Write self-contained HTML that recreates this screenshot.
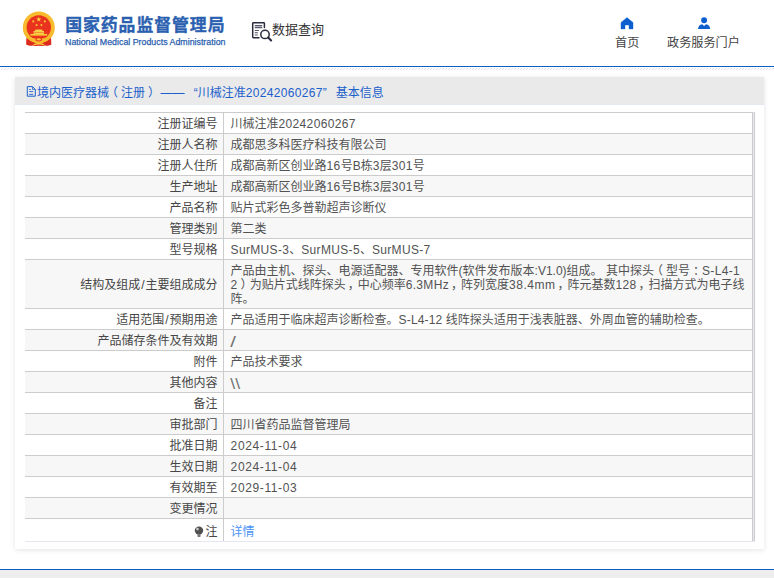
<!DOCTYPE html>
<html lang="zh-CN">
<head>
<meta charset="utf-8">
<title>国家药品监督管理局 数据查询</title>
<style>
*{box-sizing:border-box;margin:0;padding:0}
html,body{width:774px;height:578px;overflow:hidden;background:#fff}
body{position:relative;font-family:"Liberation Sans","Noto Sans CJK SC",sans-serif;font-size:12px;color:#444}
.abs{position:absolute;white-space:nowrap}
#hdrline{left:0;top:65.7px;width:774px;height:1.3px;background:#0c5fc2}
#hatch{left:0;top:67.7px;width:774px;height:2.6px;background:repeating-linear-gradient(135deg,#dedede 0,#dedede 0.6px,#fff 0.6px,#fff 2.1213px)}
#cn{left:65.2px;top:12.9px;font-size:16.9px;font-weight:bold;color:#2b5fb0;-webkit-text-stroke:.35px #2b5fb0;line-height:26px;letter-spacing:.92px}
#en{left:65px;top:37.1px;font-size:8.83px;color:#2b5fb0;-webkit-text-stroke:.25px #2b5fb0;line-height:10px;font-family:"Liberation Sans",sans-serif}
#dq{left:272px;top:20px;font-size:13px;color:#333;line-height:20px}
#home{left:615px;top:34.3px;font-size:12.15px;color:#444;line-height:18px}
#gov{left:667px;top:34.3px;font-size:12.15px;color:#444;line-height:18px}
#panel{left:15px;top:77px;width:749px;height:472px;background:#fff;box-shadow:0 1px 5px rgba(0,0,0,.11)}
#ptitle{left:0;top:0;width:749px;height:28px;background:#eaeaea;border-bottom:1px solid #e4e8f3;color:#1b5fcb;line-height:28px;padding-top:1.5px;padding-left:22px;font-size:12px}
#tbl{left:10px;top:35px;width:730px}
.r{position:relative;display:flex;width:730px;height:21px;border-top:1px solid #ccc;background:#fff}
.r.g{background:#f7f7f7}
.r .l{width:199px;height:20px;line-height:22px;text-align:right;padding-right:5.6px;border-right:1px solid #ccc;color:#464646;white-space:nowrap;flex:none}
.r .v{flex:1;height:20px;line-height:22px;padding-left:6.6px;color:#525252;white-space:nowrap}
.r.tall{height:49px}
.r.tall .l{height:48px;line-height:50px}
.sl{padding:0 .9px}
.bs{display:inline-block;transform-origin:0 32%;color:#727272}
.r.tall .v{height:48px;line-height:13.7px;padding-top:5.3px}
.r.last{height:23px}
.r.last .l,.r.last .v{height:22px;line-height:27px}
.d{letter-spacing:.62px}
.e2{letter-spacing:.5px}
.e1{letter-spacing:.15px}
.e{letter-spacing:.33px}
.pl{position:relative;left:-3px}
.pr{position:relative;left:3px}
.pc{position:relative;left:2px}
#rb{left:727px;top:0;width:3px;height:430px;border-left:1px solid #ccc;border-right:1px solid #ccc;background:#e8e8ee}
#bb{left:0;top:429px;width:730px;height:1px;background:#e6e6f2}
a.lnk{color:#4a93f5;text-decoration:none}
#ftline{left:0;top:568.8px;width:774px;height:1.3px;background:#0c5fc2}
#ftbg{left:0;top:570px;width:774px;height:8px;background:#eee}
</style>
</head>
<body>
<!-- header -->
<svg class="abs" id="emblem" style="left:15px;top:5px" width="50" height="50" viewBox="0 0 50 50">
  <path d="M11.6 31 L11.4 39.6 Q14.5 41.2 17.6 40.2 L20 41 L23.8 40.6 L27.6 41 L30 40.2 Q33 41.2 36.2 39.6 L36 31 Z" fill="#dc2a1c"/>
  <circle cx="23.8" cy="22.5" r="16" fill="#f7bb2d"/>
  <circle cx="23.8" cy="22.5" r="12.2" fill="#e9331f"/>
  <path d="M11.6 33.5 L11.4 39.6 Q14.5 41.2 17.6 40.2 L20 41 L23.8 40.6 L27.6 41 L30 40.2 Q33 41.2 36.2 39.6 L36 33.5 Q30 38.6 23.8 38.6 Q17.6 38.6 11.6 33.5 Z" fill="#dc2a1c"/>
  <polygon points="23.8,11.6 24.45,13.5 26.45,13.5 24.85,14.7 25.45,16.6 23.8,15.45 22.15,16.6 22.75,14.7 21.15,13.5 23.15,13.5" fill="#f9d53c"/>
  <circle cx="18.3" cy="16.4" r="1.05" fill="#f6c634"/><circle cx="29.8" cy="16.4" r="1.05" fill="#f6c634"/>
  <circle cx="21.6" cy="20.1" r="1.05" fill="#f6c634"/><circle cx="26.4" cy="20.1" r="1.05" fill="#f6c634"/>
  <path d="M19.9 26 L20.6 24.6 H27 L27.7 26 H29 V28.9 H18.6 V26 Z" fill="#f8cf45"/>
  <rect x="15.4" y="28.9" width="16.8" height="1.8" fill="#f7c535"/>
  <path d="M19 27.5 H28.6" stroke="#e9331f" stroke-width=".55" opacity=".7"/>
  <path d="M13.5 32 Q23.8 35.5 34.1 32 L32 35.4 Q23.8 38.8 15.6 35.4 Z" fill="#f7bb2d"/>
  <ellipse cx="23.8" cy="34.6" rx="3.4" ry="1.8" fill="#e9331f"/>
  <ellipse cx="23.8" cy="34.4" rx="2.2" ry="1.1" fill="#f7c535"/>
  <path d="M18.2 39.2 Q23.8 36.2 29.4 39.2 L28.6 40.4 Q23.8 38.4 19 40.4 Z" fill="#f7c535"/>
</svg>
<div class="abs" id="cn">国家药品监督管理局</div>
<div class="abs" id="en">National Medical Products Administration</div>
<svg class="abs" style="left:245px;top:15px" width="40" height="30" viewBox="0 0 40 30" fill="none" stroke="#2b2b3f" stroke-width="1.5">
  <path d="M19.4 12.6 V8.4 Q19.4 7.7 18.7 7.7 H8.4 Q7.7 7.7 7.7 8.4 V22.1 Q7.7 22.8 8.4 22.8 H14" stroke-linecap="round"/>
  <path d="M9.8 10.5 H17.2 M9.8 12.6 H17.2" stroke="#55556a" stroke-width="1.1"/>
  <path d="M9.8 11.55 H17.2" stroke="#b5b5c0" stroke-width="1"/>
  <path d="M9.8 15.5 H14 M9.8 17.7 H12.8 M9.8 20 H12.8" stroke="#55556a" stroke-width="1"/>
  <path d="M9.8 18.8 H12.8" stroke="#c5c5cf" stroke-width="1"/>
  <circle cx="20" cy="19.4" r="4.2"/>
  <path d="M23.2 22.6 L26.1 25.5" stroke-width="2.1" stroke-linecap="round"/>
</svg>
<div class="abs" id="dq">数据查询</div>
<svg class="abs" style="left:620px;top:17px" width="14" height="13" viewBox="0 0 14 13"><path d="M7 0.6 L13 5.5 V11.9 H9 V8 H5 V11.9 H1 V5.5 Z" fill="#0d5fd0" stroke="#0d5fd0" stroke-width=".4" stroke-linejoin="round"/></svg>
<div class="abs" id="home">首页</div>
<svg class="abs" style="left:697px;top:16px" width="14" height="14" viewBox="0 0 14 14"><circle cx="7.1" cy="4.3" r="2.95" fill="#0d5fd0"/><path d="M1 13 Q1.3 9 5.2 8.2 L7.1 10 L9 8.2 Q12.9 9 13.2 13 Z" fill="#0d5fd0"/></svg>
<div class="abs" id="gov">政务服务门户</div>
<div class="abs" id="hdrline"></div>
<div class="abs" id="hatch"></div>

<!-- panel -->
<div class="abs" id="panel">
  <div class="abs" id="ptitle">境内医疗器械<span class="pl">（</span>注册<span class="pr">）</span> —— <span style="padding-left:6px">“</span>川械注准<span class="e">20242060267</span><span style="padding-right:5.6px">”</span> 基本信息</div>
  <svg class="abs" style="left:11px;top:8px" width="11" height="13" viewBox="0 0 11 13" fill="none" stroke="#1b5fcb" stroke-width="1"><path d="M1.3 1.6 H6.5 L9.3 4.4 V11.2 H1.3 Z"/><path d="M6.5 1.8 V4.4 H9.1" stroke-width=".8"/><path d="M3.2 4.5 H4.8 M3.2 6.6 H7.2 M3.2 9.4 H7.2" stroke-width=".9"/></svg>
  <div class="abs" id="tbl">
    <div class="r"><div class="l">注册证编号</div><div class="v">川械注准<span class="e">20242060267</span></div></div>
    <div class="r g"><div class="l">注册人名称</div><div class="v">成都思多科医疗科技有限公司</div></div>
    <div class="r"><div class="l">注册人住所</div><div class="v">成都高新区创业路<span class="e">16</span>号B栋<span class="e">3</span>层<span class="e">301</span>号</div></div>
    <div class="r g"><div class="l">生产地址</div><div class="v">成都高新区创业路<span class="e">16</span>号B栋<span class="e">3</span>层<span class="e">301</span>号</div></div>
    <div class="r"><div class="l">产品名称</div><div class="v">贴片式彩色多普勒超声诊断仪</div></div>
    <div class="r g"><div class="l">管理类别</div><div class="v">第二类</div></div>
    <div class="r"><div class="l">型号规格</div><div class="v"><span class="e">SurMUS-3</span>、<span class="e">SurMUS-5</span>、<span class="e">SurMUS-7</span></div></div>
    <div class="r g tall"><div class="l">结构及组成<span class="sl">/</span>主要组成成分</div><div class="v">产品由主机、探头、电源适配器、专用软件(软件发布版本:V1.0)组成。 其中探头<span class="pl">（</span>型号<span class="pr">：</span><span class="e">S-L4-1</span><br><span class="e">2</span><span class="pr">）</span>为贴片式线阵探头<span class="pc">，</span>中心频率<span class="e">6.3MHz</span><span class="pc">，</span>阵列宽度<span class="e2">38.4mm</span><span class="pc">，</span>阵元基数<span class="e">128</span><span class="pc">，</span>扫描方式为电子线<br>阵。</div></div>
    <div class="r"><div class="l">适用范围<span class="sl">/</span>预期用途</div><div class="v">产品适用于临床超声诊断检查。<span class="e1">S-L4-12</span> 线阵探头适用于浅表脏器、外周血管的辅助检查。</div></div>
    <div class="r g"><div class="l">产品储存条件及有效期</div><div class="v"><span class="bs" style="transform:translateX(-.7px) scale(1.7,1.22)">/</span></div></div>
    <div class="r"><div class="l">附件</div><div class="v">产品技术要求</div></div>
    <div class="r g"><div class="l">其他内容</div><div class="v"><span class="bs" style="transform:translateX(-.7px) scale(1.47,1.22)">\\</span></div></div>
    <div class="r"><div class="l">备注</div><div class="v"></div></div>
    <div class="r g"><div class="l">审批部门</div><div class="v">四川省药品监督管理局</div></div>
    <div class="r"><div class="l">批准日期</div><div class="v"><span class="d">2024-11-04</span></div></div>
    <div class="r g"><div class="l">生效日期</div><div class="v"><span class="d">2024-11-04</span></div></div>
    <div class="r"><div class="l">有效期至</div><div class="v"><span class="d">2029-11-03</span></div></div>
    <div class="r g"><div class="l">变更情况</div><div class="v"></div></div>
    <div class="r last"><div class="l"><svg width="10" height="12" viewBox="0 0 10 12" style="vertical-align:-1.5px;margin-right:1px"><circle cx="5" cy="4.6" r="4.2" fill="#505050"/><rect x="3.4" y="8.6" width="3.2" height="2.4" rx=".8" fill="#777"/><circle cx="3.5" cy="3.1" r="1.3" fill="#c8c8c8"/></svg>注</div><div class="v"><a class="lnk">详情</a></div></div>
    <div class="abs" id="rb"></div>
    <div class="abs" id="bb"></div>
  </div>
</div>

<!-- footer -->
<div class="abs" id="ftline"></div>
<div class="abs" id="ftbg"></div>
</body>
</html>
